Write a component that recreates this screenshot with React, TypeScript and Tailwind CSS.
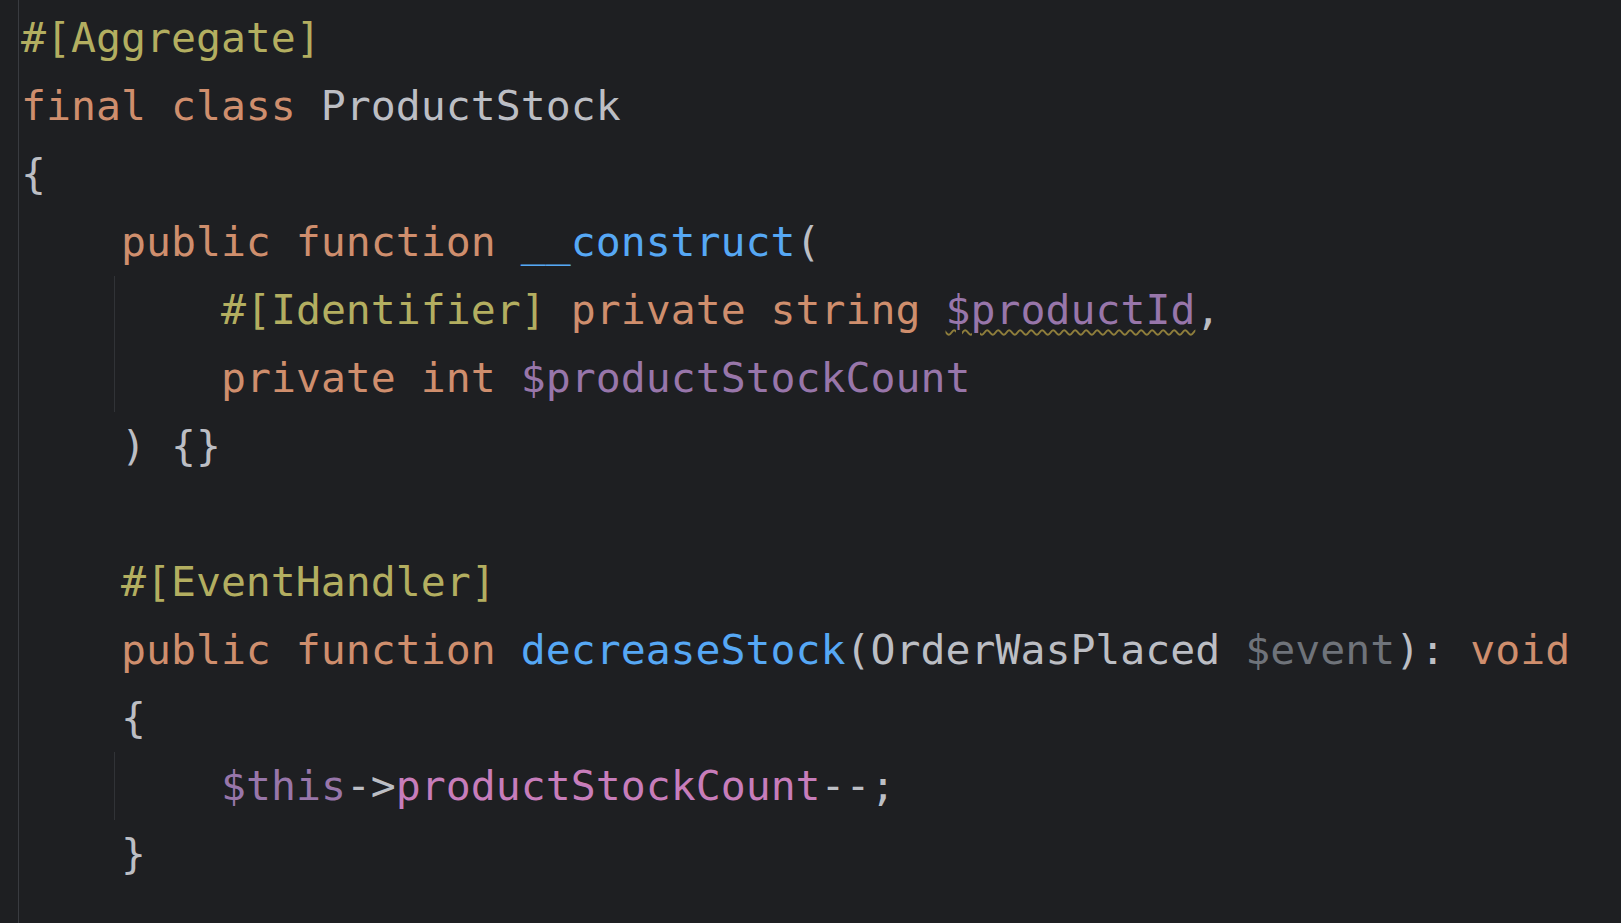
import React from 'react';

type Tok = [string, string];

const KW = 'text-[#cf8e6d]';
const ATTR = 'text-[#b3ae60]';
const FN = 'text-[#56a8f5]';
const TXT = 'text-[#bcbec4]';
const VAR = 'text-[#9876aa]';
const FIELD = 'text-[#c77dbb]';
const UNUSED = 'text-[#6f737a]';

function Line({ tokens }: { tokens: Tok[] }) {
  return (
    <div className="h-[68px] whitespace-pre">
      {tokens.map(([cls, text], i) => (
        <span key={i} className={cls}>
          {text}
        </span>
      ))}
    </div>
  );
}

export default function App() {
  return (
    <div className="h-screen w-full overflow-hidden bg-[#1e1f22]">
      <div
        className="ml-[18px] h-full border-l border-[#393b40] pl-[2px] pt-[4px] text-[41.5px] leading-[68px]"
        style={{ fontFamily: '"DejaVu Sans Mono", "Liberation Mono", monospace' }}
      >
        <Line tokens={[[ATTR, '#[Aggregate]']]} />
        <Line tokens={[[KW, 'final class '], [TXT, 'ProductStock']]} />
        <Line tokens={[[TXT, '{']]} />
        <Line tokens={[[KW, '    public function '], [FN, '__construct'], [TXT, '(']]} />

        {/* constructor params, with indent guide */}
        <div className="ml-[93px] border-l border-[#313337] pl-[6px]">
          <Line
            tokens={[
              [ATTR, '    #[Identifier] '],
              [KW, 'private string '],
              [
                `${VAR} underline decoration-wavy decoration-[#8f7e3b] decoration-[2px] underline-offset-[5px]`,
                '$productId',
              ],
              [TXT, ','],
            ]}
          />
          <Line tokens={[[KW, '    private int '], [VAR, '$productStockCount']]} />
        </div>

        <Line tokens={[[TXT, '    ) {}']]} />
        <Line tokens={[[TXT, '']]} />
        <Line tokens={[[ATTR, '    #[EventHandler]']]} />
        <Line
          tokens={[
            [KW, '    public function '],
            [FN, 'decreaseStock'],
            [TXT, '(OrderWasPlaced '],
            [UNUSED, '$event'],
            [TXT, '): '],
            [KW, 'void'],
          ]}
        />
        <Line tokens={[[TXT, '    {']]} />

        {/* method body, with indent guide */}
        <div className="ml-[93px] border-l border-[#313337] pl-[6px]">
          <Line
            tokens={[
              [VAR, '    $this'],
              [TXT, '->'],
              [FIELD, 'productStockCount'],
              [TXT, '--;'],
            ]}
          />
        </div>

        <Line tokens={[[TXT, '    }']]} />
        <Line tokens={[[TXT, '']]} />
      </div>
    </div>
  );
}
